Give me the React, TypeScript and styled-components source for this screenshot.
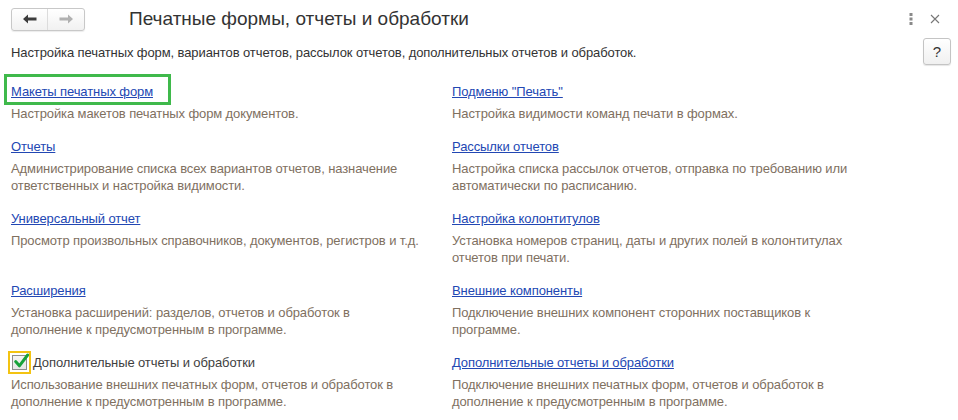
import React from "react";
import styled, { createGlobalStyle } from "styled-components";

const Global = createGlobalStyle`
  html, body { margin: 0; padding: 0; background: #fff; }
  body { font-family: "Liberation Sans", Arial, sans-serif; font-size: 13px; color: #333; letter-spacing: -0.1px; }
  * { box-sizing: border-box; }
`;

const Page = styled.div`
  width: 958px;
  height: 420px;
  overflow: hidden;
  background: #fff;
  position: relative;
`;

const Header = styled.div`
  display: flex;
  align-items: center;
  height: 33px;
  padding: 5px 8px 0 11px;
`;

const NavGroup = styled.div`
  display: flex;
  height: 23px;
  border: 1px solid #c8c8c8;
  border-radius: 3px;
  background: linear-gradient(#ffffff, #f1f1f1);
  box-shadow: 0 1px 1px rgba(0, 0, 0, 0.08);
`;

const NavButton = styled.button<{ $divider?: boolean }>`
  width: 36px;
  height: 21px;
  border: none;
  background: transparent;
  padding: 0;
  display: flex;
  align-items: center;
  justify-content: center;
  border-right: ${(p) => (p.$divider ? "1px solid #dcdcdc" : "none")};
`;

const Title = styled.h1`
  margin: -1px 0 0 44px;
  font-size: 19px;
  font-weight: normal;
  letter-spacing: 0;
  color: #333;
  flex: 1;
  white-space: nowrap;
`;

const IconButton = styled.button<{ $w: number }>`
  width: ${(p) => p.$w}px;
  height: 20px;
  border: none;
  background: transparent;
  padding: 0;
  display: flex;
  align-items: center;
  justify-content: center;
`;

const SubRow = styled.div`
  display: flex;
  align-items: center;
  justify-content: space-between;
  padding: 0 7px 0 11px;
  margin-top: 5px;
`;

const SubText = styled.div`
  color: #333;
  line-height: 17px;
  margin-top: 1px;
`;

const HelpButton = styled.button`
  width: 28px;
  height: 27px;
  border: 1px solid #c4c4c4;
  border-radius: 3px;
  background: linear-gradient(#ffffff, #f0f0f0);
  box-shadow: 0 1px 1px rgba(0, 0, 0, 0.1);
  font-family: "Liberation Sans", Arial, sans-serif;
  font-size: 15px;
  color: #333;
  padding: 0;
  display: flex;
  align-items: center;
  justify-content: center;
`;

const Grid = styled.div`
  display: grid;
  grid-template-columns: 441px 1fr;
  row-gap: 16px;
  padding-left: 11px;
  margin-top: 18px;
`;

const Cell = styled.div`
  display: flex;
  flex-direction: column;
  align-items: flex-start;
`;

const LinkWrap = styled.span<{ $focused?: boolean }>`
  position: relative;
  display: inline-block;
  line-height: 17px;
  &::after {
    content: "";
    display: ${(p) => (p.$focused ? "block" : "none")};
    position: absolute;
    left: -7px;
    top: -9px;
    right: -18px;
    bottom: -5px;
    border: 3px solid #3fb94b;
    pointer-events: none;
  }
`;

const Link = styled.a`
  color: #2247b3;
  text-decoration: underline;
  text-underline-offset: 1px;
  white-space: nowrap;
  cursor: pointer;
`;

const CheckRow = styled.label`
  display: flex;
  align-items: center;
  height: 17px;
  margin-left: -3px;
  color: #3f3f3f;
  white-space: nowrap;
`;

const CheckFrame = styled.span`
  width: 23px;
  height: 23px;
  border: 2px solid #f3c312;
  display: flex;
  align-items: center;
  justify-content: center;
  margin-right: 2px;
  flex: none;
`;

const CheckBox = styled.span`
  position: relative;
  width: 15px;
  height: 15px;
  border: 1px solid #8e8e8e;
  background: linear-gradient(#f4f4f4, #e6e6e6);
  display: block;
`;

const CheckMark = styled.svg`
  position: absolute;
  left: 0px;
  top: -4px;
`;

const Desc = styled.div`
  margin-top: 5px;
  line-height: 17px;
  color: #80705f;
  white-space: nowrap;
`;

type Item = {
  title: string;
  lines: string[];
  focused?: boolean;
  checkbox?: boolean;
};

const left: Item[] = [
  { title: "Макеты печатных форм", lines: ["Настройка макетов печатных форм документов."], focused: true },
  {
    title: "Отчеты",
    lines: [
      "Администрирование списка всех вариантов отчетов, назначение",
      "ответственных и настройка видимости.",
    ],
  },
  {
    title: "Универсальный отчет",
    lines: ["Просмотр произвольных справочников, документов, регистров и т.д."],
  },
  {
    title: "Расширения",
    lines: [
      "Установка расширений: разделов, отчетов и обработок в",
      "дополнение к предусмотренным в программе.",
    ],
  },
  {
    title: "Дополнительные отчеты и обработки",
    checkbox: true,
    lines: [
      "Использование внешних печатных форм, отчетов и обработок в",
      "дополнение к предусмотренным в программе.",
    ],
  },
];

const right: Item[] = [
  { title: "Подменю \"Печать\"", lines: ["Настройка видимости команд печати в формах."] },
  {
    title: "Рассылки отчетов",
    lines: [
      "Настройка списка рассылок отчетов, отправка по требованию или",
      "автоматически по расписанию.",
    ],
  },
  {
    title: "Настройка колонтитулов",
    lines: [
      "Установка номеров страниц, даты и других полей в колонтитулах",
      "отчетов при печати.",
    ],
  },
  {
    title: "Внешние компоненты",
    lines: [
      "Подключение внешних компонент сторонних поставщиков к",
      "программе.",
    ],
  },
  {
    title: "Дополнительные отчеты и обработки",
    lines: [
      "Подключение внешних печатных форм, отчетов и обработок в",
      "дополнение к предусмотренным в программе.",
    ],
  },
];

const ArrowLeft = ({ color }: { color: string }) => (
  <svg width="14" height="10" viewBox="0 0 14 10">
    <path d="M0 5 L5 0.5 L5 3.6 L13.5 3.6 L13.5 6.4 L5 6.4 L5 9.5 Z" fill={color} />
  </svg>
);

const ArrowRight = ({ color }: { color: string }) => (
  <svg width="14" height="10" viewBox="0 0 14 10">
    <path d="M14 5 L9 0.5 L9 3.6 L0.5 3.6 L0.5 6.4 L9 6.4 L9 9.5 Z" fill={color} />
  </svg>
);

const renderCell = (it: Item, key: string) => (
  <Cell key={key}>
    {it.checkbox ? (
      <CheckRow>
        <CheckFrame>
          <CheckBox>
            <CheckMark width="17" height="17" viewBox="0 0 16 16">
              <path
                d="M2.5 9 L6 13 L13.8 2.8"
                fill="none"
                stroke="#17a23a"
                strokeWidth="2.8"
                strokeLinecap="round"
                strokeLinejoin="round"
              />
            </CheckMark>
          </CheckBox>
        </CheckFrame>
        {it.title}
      </CheckRow>
    ) : (
      <LinkWrap $focused={it.focused}>
        <Link>{it.title}</Link>
      </LinkWrap>
    )}
    <Desc>
      {it.lines.map((l, i) => (
        <React.Fragment key={i}>
          {i > 0 && <br />}
          {l}
        </React.Fragment>
      ))}
    </Desc>
  </Cell>
);

export default function App() {
  return (
    <Page>
      <Global />
      <Header>
        <NavGroup>
          <NavButton $divider>
            <ArrowLeft color="#3c3c3c" />
          </NavButton>
          <NavButton>
            <ArrowRight color="#b0b0b0" />
          </NavButton>
        </NavGroup>
        <Title>Печатные формы, отчеты и обработки</Title>
        <IconButton $w={14}>
          <svg width="4" height="12" viewBox="0 0 4 12">
            <rect x="0.5" y="0" width="3" height="3" fill="#8a8a8a" />
            <rect x="0.5" y="4.5" width="3" height="3" fill="#8a8a8a" />
            <rect x="0.5" y="9" width="3" height="3" fill="#8a8a8a" />
          </svg>
        </IconButton>
        <IconButton $w={30} style={{ marginLeft: 2 }}>
          <svg width="10" height="10" viewBox="0 0 10 10">
            <path d="M1 1 L9 9 M9 1 L1 9" stroke="#777" strokeWidth="1.1" />
          </svg>
        </IconButton>
      </Header>
      <SubRow>
        <SubText>
          Настройка печатных форм, вариантов отчетов, рассылок отчетов, дополнительных отчетов и обработок.
        </SubText>
        <HelpButton>?</HelpButton>
      </SubRow>
      <Grid>
        {left.map((l, i) => (
          <React.Fragment key={i}>
            {renderCell(l, "l" + i)}
            {renderCell(right[i], "r" + i)}
          </React.Fragment>
        ))}
      </Grid>
    </Page>
  );
}
